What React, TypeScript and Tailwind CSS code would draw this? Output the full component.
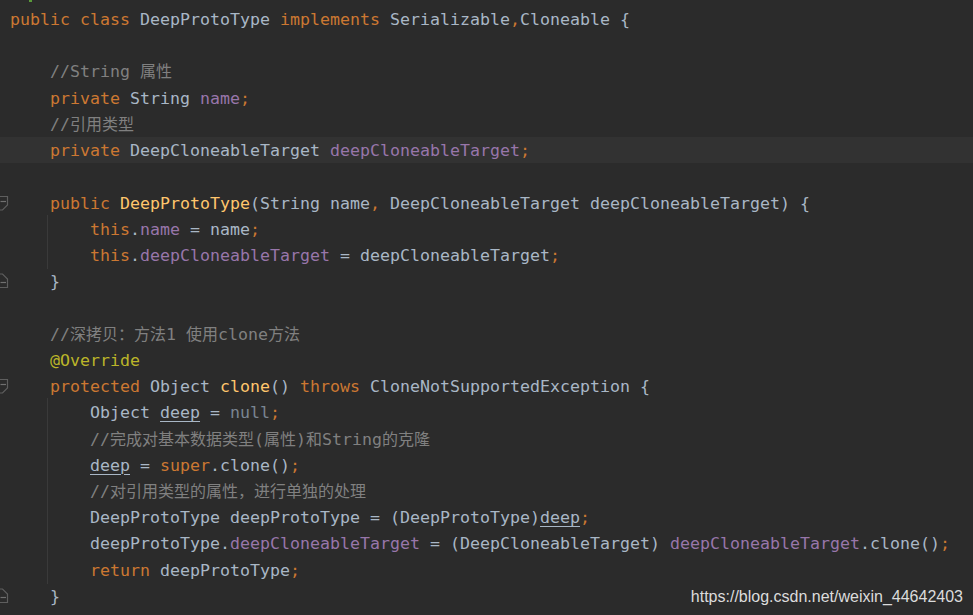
import React from "react";

type Kind = "kw" | "def" | "fld" | "cmt" | "mth" | "ann" | "nul" | "und";
type Tok = [Kind, string];

const cls: Record<Kind, string> = {
  kw: "text-[#cc7832]",
  def: "text-[#a9b7c6]",
  fld: "text-[#9876aa]",
  cmt: "text-[#808080]",
  mth: "text-[#ffc66d]",
  ann: "text-[#bbb529]",
  nul: "text-[#7a8591]",
  und: "text-[#a9b7c6] underline underline-offset-[3px] decoration-[1px]",
};

function renderText(t: string) {
  const parts = t.split(/([\u3000-\u303f\u4e00-\u9fff\uff00-\uffef]+)/);
  return parts.map((p, i) =>
    /[\u3000-\u303f\u4e00-\u9fff\uff00-\uffef]/.test(p) ? (
      <span key={i} className="text-[16px] tracking-normal">
        {p}
      </span>
    ) : (
      <React.Fragment key={i}>{p}</React.Fragment>
    )
  );
}

type Row = {
  indent: number;
  toks: Tok[];
  hl?: boolean;
  fold?: "open" | "close";
  guide?: boolean;
};

const rows: Row[] = [
  {
    indent: 0,
    toks: [
      ["kw", "public class "],
      ["def", "DeepProtoType "],
      ["kw", "implements "],
      ["def", "Serializable"],
      ["kw", ","],
      ["def", "Cloneable {"],
    ],
  },
  { indent: 0, toks: [] },
  { indent: 1, toks: [["cmt", "//String 属性"]] },
  {
    indent: 1,
    toks: [
      ["kw", "private "],
      ["def", "String "],
      ["fld", "name"],
      ["kw", ";"],
    ],
  },
  { indent: 1, toks: [["cmt", "//引用类型"]] },
  {
    indent: 1,
    hl: true,
    toks: [
      ["kw", "private "],
      ["def", "DeepCloneableTarget "],
      ["fld", "deepCloneableTarget"],
      ["kw", ";"],
    ],
  },
  { indent: 0, toks: [] },
  {
    indent: 1,
    fold: "open",
    toks: [
      ["kw", "public "],
      ["mth", "DeepProtoType"],
      ["def", "(String name"],
      ["kw", ","],
      ["def", " DeepCloneableTarget deepCloneableTarget) {"],
    ],
  },
  {
    indent: 2,
    guide: true,
    toks: [
      ["kw", "this"],
      ["def", "."],
      ["fld", "name"],
      ["def", " = name"],
      ["kw", ";"],
    ],
  },
  {
    indent: 2,
    guide: true,
    toks: [
      ["kw", "this"],
      ["def", "."],
      ["fld", "deepCloneableTarget"],
      ["def", " = deepCloneableTarget"],
      ["kw", ";"],
    ],
  },
  { indent: 1, fold: "close", toks: [["def", "}"]] },
  { indent: 0, toks: [] },
  { indent: 1, toks: [["cmt", "//深拷贝：方法1 使用clone方法"]] },
  { indent: 1, toks: [["ann", "@Override"]] },
  {
    indent: 1,
    fold: "open",
    toks: [
      ["kw", "protected "],
      ["def", "Object "],
      ["mth", "clone"],
      ["def", "() "],
      ["kw", "throws "],
      ["def", "CloneNotSupportedException {"],
    ],
  },
  {
    indent: 2,
    guide: true,
    toks: [
      ["def", "Object "],
      ["und", "deep"],
      ["def", " = "],
      ["nul", "null"],
      ["kw", ";"],
    ],
  },
  { indent: 2, guide: true, toks: [["cmt", "//完成对基本数据类型(属性)和String的克隆"]] },
  {
    indent: 2,
    guide: true,
    toks: [
      ["und", "deep"],
      ["def", " = "],
      ["kw", "super"],
      ["def", ".clone()"],
      ["kw", ";"],
    ],
  },
  { indent: 2, guide: true, toks: [["cmt", "//对引用类型的属性，进行单独的处理"]] },
  {
    indent: 2,
    guide: true,
    toks: [
      ["def", "DeepProtoType deepProtoType = (DeepProtoType)"],
      ["und", "deep"],
      ["kw", ";"],
    ],
  },
  {
    indent: 2,
    guide: true,
    toks: [
      ["def", "deepProtoType."],
      ["fld", "deepCloneableTarget"],
      ["def", " = (DeepCloneableTarget) "],
      ["fld", "deepCloneableTarget"],
      ["def", ".clone()"],
      ["kw", ";"],
    ],
  },
  {
    indent: 2,
    guide: true,
    toks: [
      ["kw", "return "],
      ["def", "deepProtoType"],
      ["kw", ";"],
    ],
  },
  { indent: 1, fold: "close", toks: [["def", "}"]] },
];

function FoldMarker({ kind }: { kind: "open" | "close" }) {
  return kind === "open" ? (
    <svg width="10" height="26" viewBox="0 0 10 26" className="block">
      <path
        d="M-1 6.5 H7.5 V15 L2.5 20 H-1"
        fill="none"
        stroke="#5e5e5e"
        strokeWidth="1.2"
      />
      <path d="M0.5 11.5 H6" stroke="#707070" strokeWidth="1.2" />
    </svg>
  ) : (
    <svg width="10" height="26" viewBox="0 0 10 26" className="block">
      <path
        d="M-1 6 H2.5 L7.5 11 V19.5 H-1"
        fill="none"
        stroke="#5e5e5e"
        strokeWidth="1.2"
      />
      <path d="M0.5 14.5 H6" stroke="#707070" strokeWidth="1.2" />
    </svg>
  );
}

export default function App() {
  return (
    <div className="relative w-[973px] h-[615px] overflow-hidden bg-[#2b2b2b] pt-[6px] font-['DejaVu_Sans_Mono','Noto_Sans_CJK_SC',monospace] text-[16.6px]">
      <div className="absolute left-[29px] top-0 h-[2px] w-[3px] bg-[#5a9a3a]" />
      <div className="flex flex-col">
        {rows.map((r, i) => (
          <div
            key={i}
            className={
              "flex h-[26.23px] items-stretch " + (r.hl ? "bg-[#323232]" : "")
            }
          >
            <div className="w-[10px] shrink-0">
              {r.fold ? <FoldMarker kind={r.fold} /> : null}
            </div>
            <div className="flex items-center whitespace-pre leading-[26.23px] pt-[2px] tracking-[0.01px]">
              {r.indent >= 1 ? (
                <span className="relative inline-block w-[40px] h-[26.23px]">
                  {r.guide ? (
                    <span className="absolute right-[2px] top-[-2px] h-[28px] w-[1px] bg-[#3a3a3a]" />
                  ) : null}
                </span>
              ) : null}
              {r.indent >= 2 ? (
                <span className="inline-block w-[40px] h-[26.23px]" />
              ) : null}
              {r.toks.map(([k, t], j) => (
                <span key={j} className={cls[k]}>
                  {renderText(t)}
                </span>
              ))}
            </div>
          </div>
        ))}
      </div>
      <div className="absolute right-[10px] bottom-[9px] font-['Liberation_Sans',Arial,sans-serif] text-[16px] leading-[18px] text-[#dcdcdc]">
        https://blog.csdn.net/weixin_44642403
      </div>
    </div>
  );
}
